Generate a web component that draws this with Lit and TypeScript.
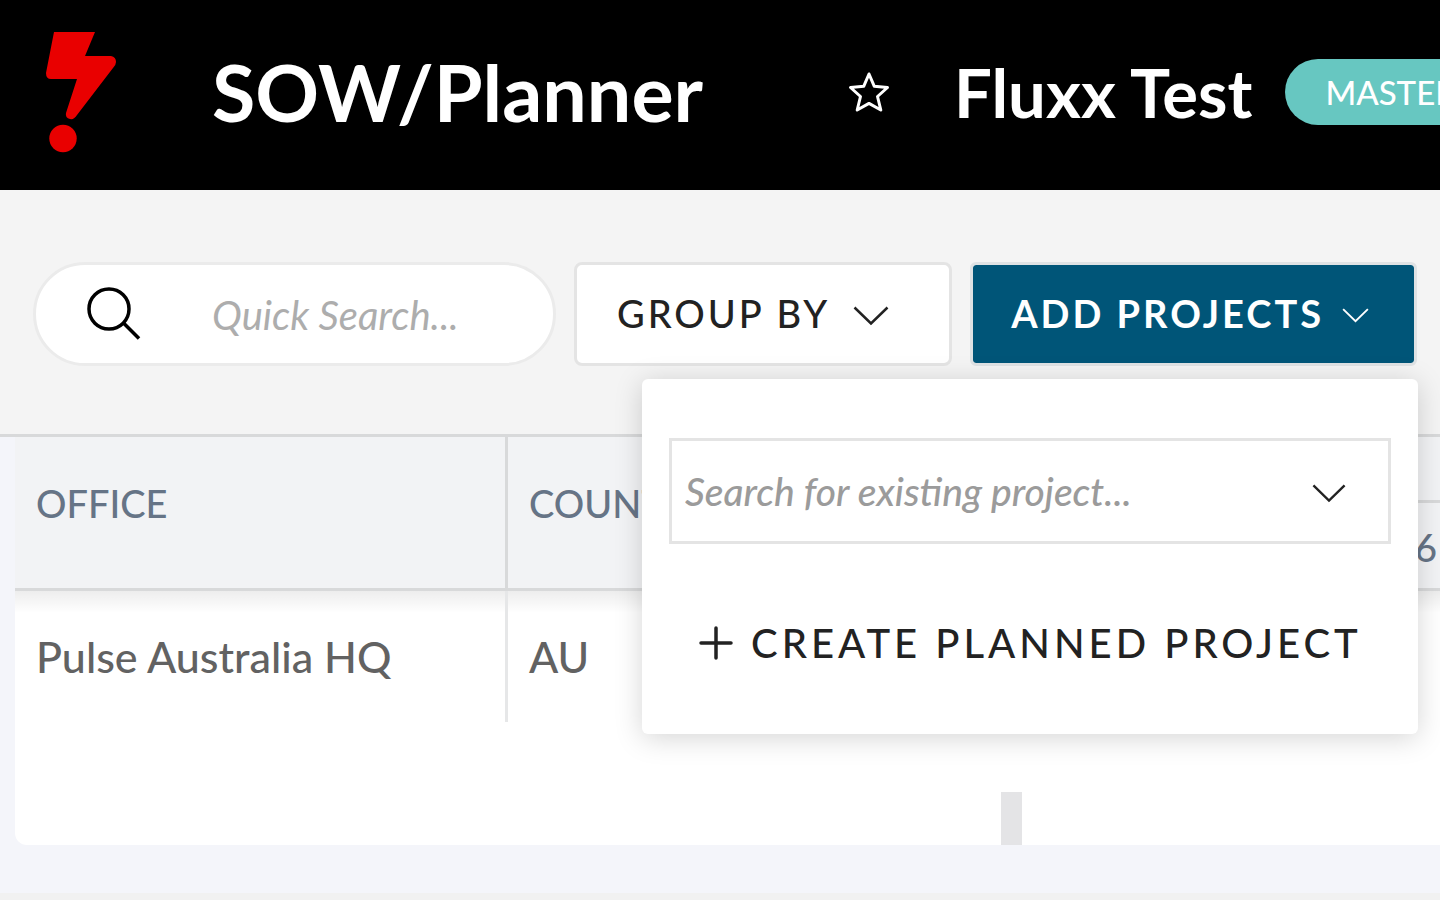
import { LitElement, html, css, svg } from "lit";
import { customElement, state } from "lit/decorators.js";

const chevron = (cls: string) => svg`
  <svg class=${cls} viewBox="0 0 36 20" fill="none" stroke="currentColor" aria-hidden="true">
    <path d="M1.5 1.5 18 17.5 34.5 1.5" />
  </svg>`;

@customElement("planner-header")
class PlannerHeader extends LitElement {
  static styles = css`
    :host {
      display: block;
      background: #000;
      color: #fff;
    }
    .bar {
      display: flex;
      align-items: center;
      height: 190px;
      box-sizing: border-box;
      padding: 0 0 6px 44px;
      overflow: hidden;
      white-space: nowrap;
    }
    .logo {
      flex: none;
      width: 74px;
      height: 124px;
      margin-right: 94px;
    }
    .title,
    .name {
      margin: 0;
      font-weight: 700;
    }
    .title {
      font-size: 79px;
      line-height: 94px;
    }
    .name {
      font-size: 67px;
      line-height: 80px;
    }
    .star {
      flex: none;
      display: flex;
      margin: 0 64px 0 145px;
      padding: 0;
      border: 0;
      background: none;
      color: inherit;
    }
    .star-icon {
      width: 42px;
      height: 42px;
    }
    .tag {
      flex: none;
      margin-left: 33px;
      padding: 0 40px;
      border-radius: 33px;
      background: #67c7c1;
      font-size: 33px;
      font-weight: 500;
      line-height: 66px;
    }
  `;

  render() {
    return html`
      <header class="bar">
        <svg class="logo" viewBox="44 30 74 124" fill="#e90000" role="img" aria-label="Home">
          <path d="M54 32H95L85 56H111Q116 57 116 62Q116 65 113 68L77 115Q74 120 70 119Q65 118 66 113L77 79H51Q46 79 46 73Z" />
          <circle cx="63" cy="138.5" r="13.7" />
        </svg>
        <h1 class="title">SOW/Planner</h1>
        <button class="star" type="button" aria-label="Favourite">
          <svg class="star-icon" viewBox="0 0 42 42" fill="none" stroke="currentColor" stroke-width="3" stroke-linejoin="round">
            <path d="M21 3 26.2 15.2 39.5 16.5 29.5 25.5 32.8 39 21 32.4 9.200 39 12.500 25.500 2.500 16.500 15.800 15.200Z" />
          </svg>
        </button>
        <h2 class="name">Fluxx Test</h2>
        <span class="tag">MASTER</span>
      </header>
    `;
  }
}

@customElement("planner-toolbar")
class PlannerToolbar extends LitElement {
  @state() private open = true;

  static styles = css`
    :host {
      display: block;
      background: #f4f4f4;
      border-bottom: 3px solid #d8d9da;
    }
    .tools {
      display: flex;
      align-items: center;
      gap: 18px;
      padding: 72px 23px 68px 33px;
    }
    input,
    button {
      font-family: inherit;
    }
    .search {
      flex: 1;
      display: flex;
      align-items: center;
      min-width: 0;
      height: 104px;
      box-sizing: border-box;
      padding: 2px 48px 0 50px;
      border: 3px solid #ebebeb;
      border-radius: 52px;
      background: #fff;
    }
    .search-icon {
      flex: none;
      width: 56px;
      height: 56px;
      margin-right: 70px;
    }
    .field {
      flex: 1;
      min-width: 0;
      width: 0;
      padding: 0;
      border: 0;
      outline: 0;
      background: none;
      font-size: 40px;
      font-style: italic;
      line-height: 48px;
      color: #222;
    }
    .field::placeholder {
      color: #adadad;
      opacity: 1;
    }
    .btn {
      display: flex;
      align-items: center;
      height: 104px;
      box-sizing: border-box;
      border: 3px solid #e4e4e4;
      border-radius: 8px;
      background: #fff;
      color: #222;
      font-size: 38px;
      font-weight: 500;
      line-height: 46px;
      letter-spacing: 3px;
      white-space: nowrap;
    }
    .group {
      padding: 0 60px 2px 40px;
      gap: 23px;
    }
    .add {
      padding: 0 45px 2px 38px;
      gap: 18px;
      border-radius: 6px;
      background: #005578;
      background-clip: padding-box;
      color: #fff;
      font-weight: 700;
      border-color: #dfe2e4;
    }
    .chev {
      width: 36px;
      height: 20px;
      margin-top: 6px;
      stroke-width: 2.5;
    }
    .chev-small {
      width: 27px;
      height: 15px;
      margin-top: 4px;
      stroke-width: 2.5;
    }
    .anchor {
      position: relative;
    }
    .menu {
      position: absolute;
      z-index: 2;
      top: 117px;
      right: -1px;
      width: 776px;
      box-sizing: border-box;
      padding: 59px 27px 60px;
      border-radius: 6px;
      background: #fff;
      box-shadow: 0 4px 28px rgba(0, 0, 0, 0.17);
    }
    .combo {
      display: flex;
      align-items: center;
      height: 106px;
      box-sizing: border-box;
      padding: 0 42px 0 13px;
      border: 3px solid #e4e4e4;
    }
    .combo .field {
      font-size: 39px;
      font-weight: 500;
    }
    .combo .field::placeholder {
      color: #9b9b9b;
    }
    .chev-combo {
      width: 34px;
      height: 19px;
      margin-top: 4px;
      stroke-width: 2.5;
      color: #222;
    }
    .create {
      display: flex;
      align-items: center;
      gap: 18px;
      margin-top: 68px;
      padding: 0 0 0 30px;
      border: 0;
      background: none;
      color: #222;
      font-size: 40px;
      font-weight: 500;
      line-height: 62px;
      letter-spacing: 4px;
      white-space: nowrap;
    }
    .plus {
      width: 34px;
      height: 34px;
    }
  `;

  render() {
    return html`
      <div class="tools">
        <label class="search">
          <svg class="search-icon" viewBox="0 0 56 56" fill="none" stroke="#000" stroke-width="3.500" role="img" aria-label="Quick Search">
            <circle cx="23" cy="22" r="20" />
            <path d="M37.500 36 53 51.500" />
          </svg>
          <input class="field" type="text" placeholder="Quick Search..." />
        </label>
        <button class="btn group" type="button">GROUP BY ${chevron("chev")}</button>
        <div class="anchor">
          <button class="btn add" type="button" aria-expanded=${this.open} @click=${() => (this.open = !this.open)}>
            ADD PROJECTS ${chevron("chev-small")}
          </button>
          ${this.open
            ? html`<div class="menu">
                <label class="combo">
                  <input class="field" type="text" role="combobox" aria-expanded="false" aria-label="Search for existing project" placeholder="Search for existing project..." />
                  ${chevron("chev-combo")}
                </label>
                <button class="create" type="button">
                  <svg class="plus" viewBox="0 0 34 34" fill="none" stroke="currentColor" stroke-width="3.500" stroke-linecap="round" aria-hidden="true">
                    <path d="M17 2V32M2 17H32" />
                  </svg>
                  CREATE PLANNED PROJECT
                </button>
              </div>`
            : null}
        </div>
      </div>
    `;
  }
}

@customElement("planner-grid")
class PlannerGrid extends LitElement {
  static styles = css`
    :host {
      display: flex;
      flex-direction: column;
      flex: 1;
      padding: 0 0 48px 15px;
      background: #f4f5fa;
    }
    .panel {
      flex: 1;
      display: flex;
      flex-direction: column;
      justify-content: space-between;
      border-radius: 0 0 0 12px;
      background: #fff;
      overflow: hidden;
    }
    .table {
      width: 100%;
      table-layout: fixed;
      border-collapse: separate;
      border-spacing: 0;
      text-align: left;
    }
    .office {
      width: 493px;
    }
    .week {
      width: 32px;
    }
    th {
      box-sizing: border-box;
      padding: 42px 21px 0;
      border-bottom: 3px solid #d8d9da;
      background: #f2f3f5;
      color: #667486;
      font-size: 38px;
      font-weight: 500;
      line-height: 48px;
      vertical-align: top;
    }
    th.rule {
      border-right: 3px solid #d8d9da;
    }
    th.month {
      height: 66px;
      padding: 0;
    }
    th.day {
      height: 88px;
      padding: 20px 0 0 7px;
    }
    td {
      box-sizing: border-box;
      height: 131px;
      padding: 0 21px;
      background: linear-gradient(rgba(0, 0, 0, 0.07), rgba(0, 0, 0, 0)) top / 100% 22px no-repeat;
      color: #626262;
      font-size: 43px;
      font-weight: 500;
      line-height: 52px;
      vertical-align: middle;
    }
    td.rule {
      border-right: 3px solid #e6e7e8;
    }
    .track {
      padding-left: 69.2%;
    }
    .thumb {
      width: 21px;
      height: 53px;
      background: #e4e4e6;
    }
  `;

  render() {
    return html`
      <section class="panel">
        <table class="table">
          <colgroup>
            <col class="office" />
            <col />
            <col class="week" />
          </colgroup>
          <thead>
            <tr>
              <th class="rule" rowspan="2" scope="col">OFFICE</th>
              <th rowspan="2" scope="col">COUNTRY</th>
              <th class="month"></th>
            </tr>
            <tr>
              <th class="day" scope="col">6</th>
            </tr>
          </thead>
          <tbody>
            <tr>
              <td class="rule">Pulse Australia HQ</td>
              <td>AU</td>
              <td></td>
            </tr>
          </tbody>
        </table>
        <div class="track"><div class="thumb"></div></div>
      </section>
    `;
  }
}

@customElement("app-root")
class AppRoot extends LitElement {
  static styles = css`
    :host {
      display: flex;
      flex-direction: column;
      min-height: 100vh;
      box-sizing: border-box;
      border-bottom: 7px solid #f1f1f1;
      font-family: Lato, "Open Sans", sans-serif;
    }
  `;

  render() {
    return html`
      <planner-header></planner-header>
      <planner-toolbar></planner-toolbar>
      <planner-grid></planner-grid>
    `;
  }
}
